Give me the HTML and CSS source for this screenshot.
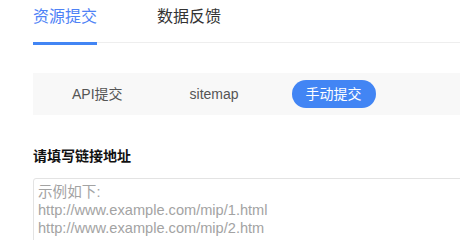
FILE: index.html
```html
<!DOCTYPE html>
<html lang="zh-CN">
<head>
<meta charset="utf-8">
<link rel="stylesheet" href="styles.css">
</head>
<body>
<div class="page">
  <div class="tabs">
    <div class="tab active">资源提交</div>
    <div class="tab">数据反馈</div>
  </div>
  <div class="modes">
    <div class="mode">API提交</div>
    <div class="mode">sitemap</div>
    <div class="mode current">手动提交</div>
  </div>
  <div class="label">请填写链接地址</div>
  <textarea class="urls" placeholder="示例如下:&#10;http://www.example.com/mip/1.html&#10;http://www.example.com/mip/2.htm"></textarea>
</div>
</body>
</html>
```
FILE: styles.css
```css
html, body {
  margin: 0;
  padding: 0;
  background: #fff;
  overflow: hidden;
}
body {
  font-family: "Liberation Sans", "Noto Sans CJK SC", sans-serif;
  color: #333;
}
.page {
  padding-left: 33px;
  width: 700px;
}
.tabs {
  display: flex;
  gap: 60px;
  border-bottom: 1px solid #eeeeee;
  height: 42px;
}
.tab {
  font-size: 16px;
  line-height: 20px;
  padding-top: 7px;
  height: 35px;
  color: #333;
  border-bottom: 3px solid transparent;
}
.tab.active {
  color: #4e82f6;
  border-bottom-color: #4285f4;
}
.modes {
  margin-top: 30px;
  height: 42px;
  background: #f8f8f8;
  display: flex;
  align-items: center;
  gap: 39px;
  padding-left: 25px;
}
.mode {
  font-size: 14px;
  line-height: 28px;
  height: 28px;
  padding: 0 14px;
  color: #555;
  border-radius: 14px;
}
.mode.current {
  background: #4285f4;
  color: #fff;
}
.label {
  margin-top: 31px;
  font-size: 14px;
  line-height: 20px;
  font-weight: bold;
  color: #111;
}
.urls {
  display: block;
  margin-top: 12px;
  width: 600px;
  height: 120px;
  box-sizing: border-box;
  border: 1px solid #e3e3e3;
  border-radius: 3px;
  padding: 4px;
  font-family: "Liberation Sans", "Noto Sans CJK SC", sans-serif;
  font-size: 14.6px;
  line-height: 18px;
  resize: none;
  outline: none;
  background: #fff;
}
.urls::placeholder {
  color: #a3a3a3;
  opacity: 1;
}
```
